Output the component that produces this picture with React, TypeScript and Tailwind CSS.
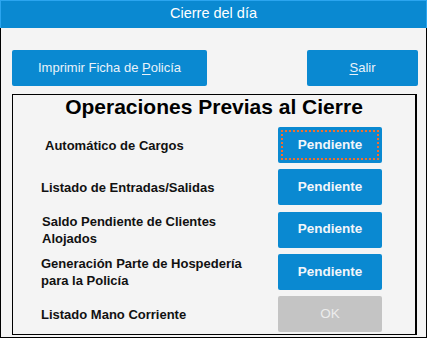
import React from "react";

function Row({
  label,
  pl,
  children,
}: {
  label: React.ReactNode;
  pl: string;
  children: React.ReactNode;
}) {
  return (
    <div className="flex items-center h-[36px]">
      <div className={`flex-1 ${pl} text-[13px] leading-[17px] font-bold text-[#111111] whitespace-nowrap`}>{label}</div>
      <div className="w-[104px] h-[36px] mr-[33px]">{children}</div>
    </div>
  );
}

function Pend({ focused }: { focused?: boolean }) {
  return (
    <button
      className={`w-full h-full rounded-[2px] bg-[#0a89d1] text-[#f2f6fa] text-[13.5px] font-bold flex items-center justify-center ${
        focused ? "outline-2 outline-dotted outline-[#f26d2c] outline-offset-[-5px]" : ""
      }`}
    >
      <span>Pendiente</span>
    </button>
  );
}

export default function App() {
  return (
    <div className="w-[427px] h-[338px] bg-[#f4f4f4] flex flex-col font-['Liberation_Sans',Arial,sans-serif]">
      <div className="h-[28px] shrink-0 bg-[#0a89d1] border border-b-0 border-[#2ba5ef] flex items-center justify-center text-white text-[14.5px] pb-[1px]">
        Cierre del día
      </div>
      <div className="flex-1 flex flex-col border-l border-r border-b border-black pl-[11px] pt-[22px]">
        <div className="flex h-[36px] w-[406px]">
          <button className="w-[195px] h-[36px] rounded-[2px] bg-[#0a89d1] text-[#e9f2fa] text-[13px] flex items-center justify-center">
            <span>
              Imprimir Ficha de <span className="underline underline-offset-2">P</span>olicía
            </span>
          </button>
          <button className="ml-auto w-[111px] h-[36px] rounded-[2px] bg-[#0a89d1] text-[#e9f2fa] text-[13px] flex items-center justify-center">
            <span>
              <span className="underline underline-offset-2">S</span>alir
            </span>
          </button>
        </div>
        <div className="mt-[8px] w-[405px] h-[241px] border border-r-2 border-black flex flex-col">
          <div className="h-[24px] leading-[24px] text-[21px] font-bold text-black text-center">
            Operaciones Previas al Cierre
          </div>
          <div className="mt-[8px] flex flex-col gap-[6.25px]">
            <Row label="Automático de Cargos" pl="pl-[32px]">
              <Pend focused />
            </Row>
            <Row label="Listado de Entradas/Salidas" pl="pl-[28px]">
              <Pend />
            </Row>
            <Row label={<>Saldo Pendiente de Clientes<br />Alojados</>} pl="pl-[29px]">
              <Pend />
            </Row>
            <Row label={<>Generación Parte de Hospedería<br />para la Policía</>} pl="pl-[28px]">
              <Pend />
            </Row>
            <Row label="Listado Mano Corriente" pl="pl-[28px]">
              <button className="w-full h-full rounded-[2px] bg-[#c4c4c4] text-[#ececec] text-[13.5px] flex items-center justify-center">
                OK
              </button>
            </Row>
          </div>
        </div>
      </div>
    </div>
  );
}
